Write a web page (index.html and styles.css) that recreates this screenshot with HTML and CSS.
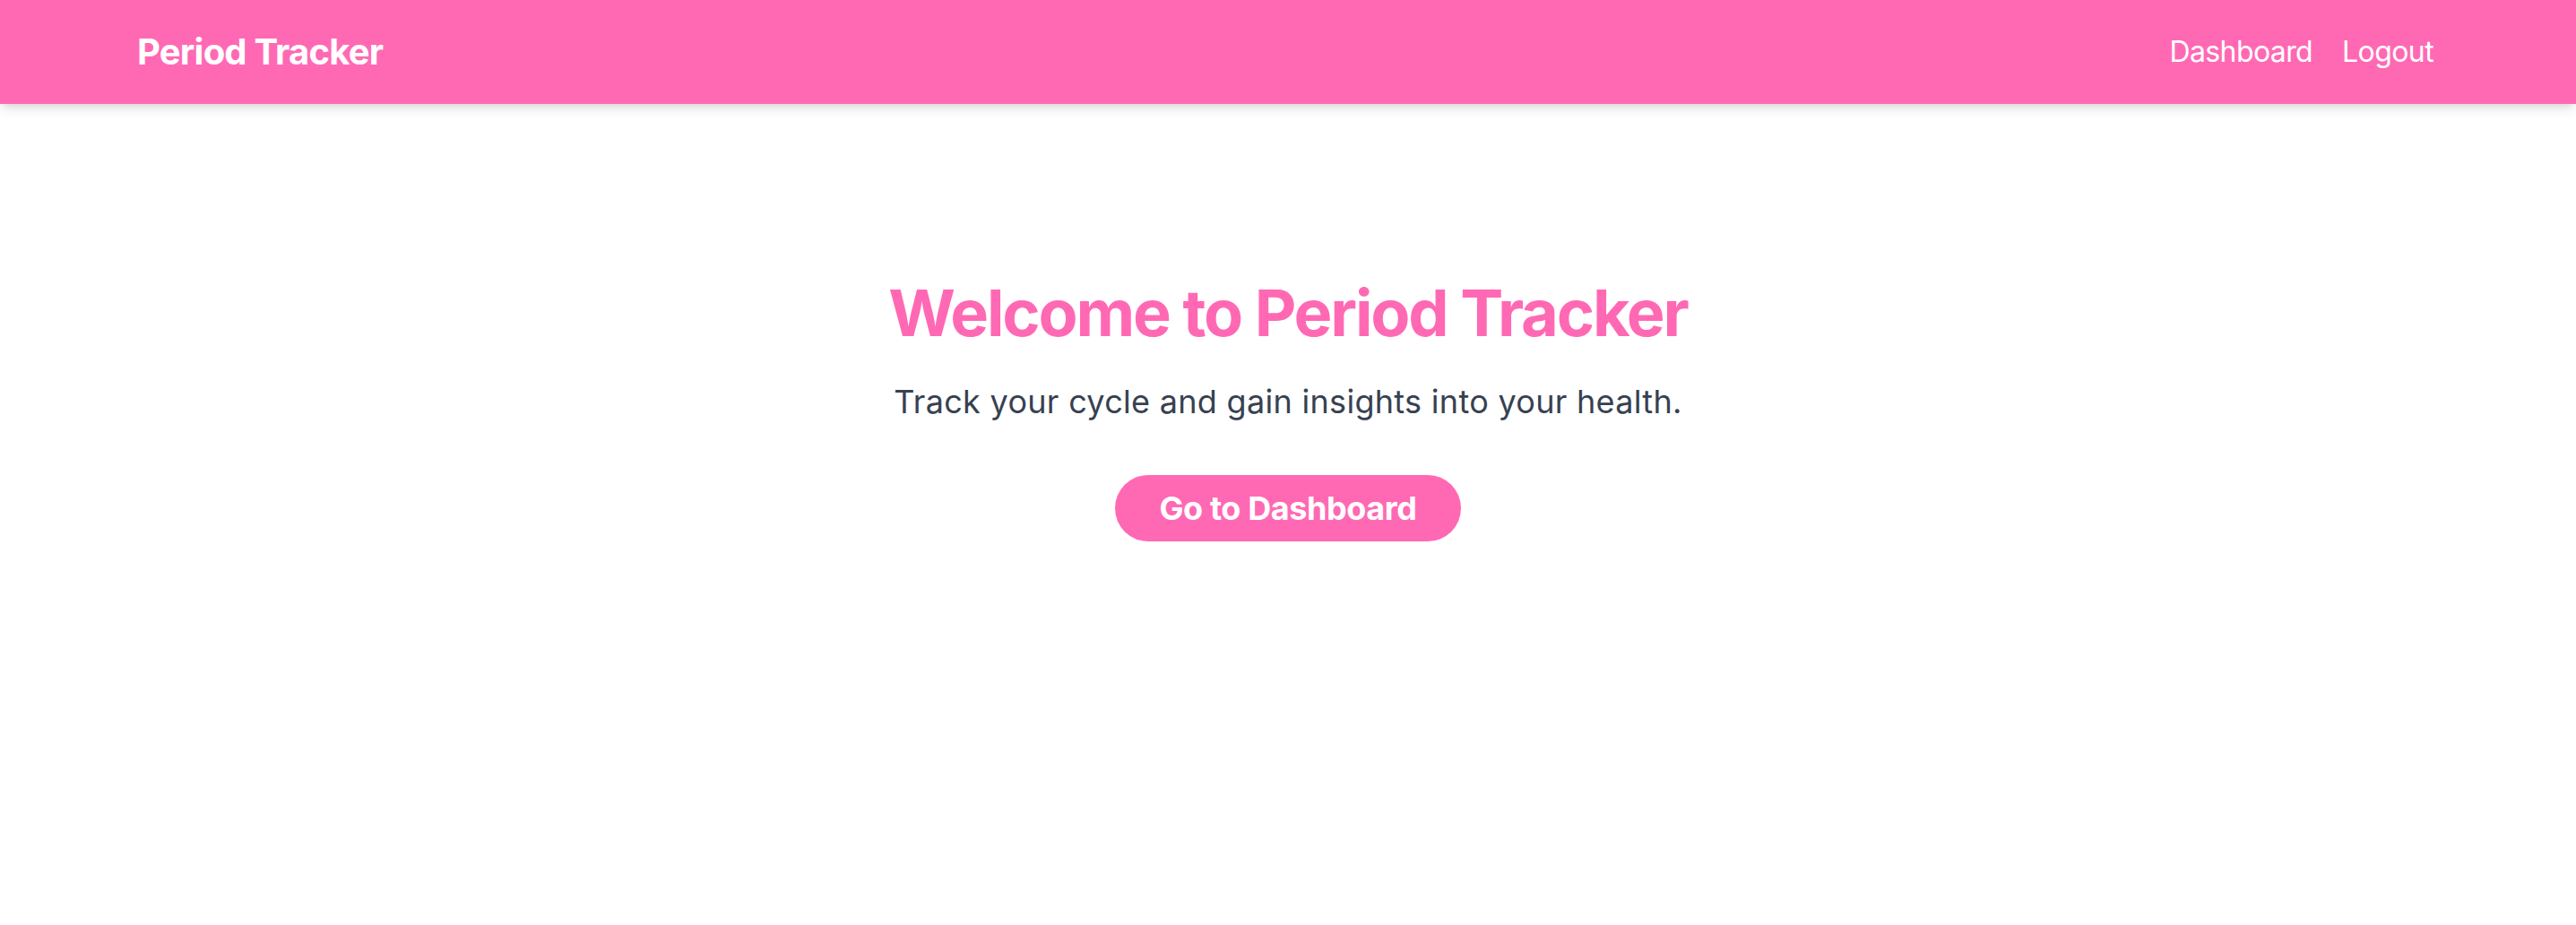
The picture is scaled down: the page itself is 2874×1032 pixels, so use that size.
FILE: index.html
```html
<!DOCTYPE html>
<html lang="en">
<head>
<meta charset="utf-8">
<title>Period Tracker</title>
<link rel="stylesheet" href="styles.css">
</head>
<body>
<nav class="navbar">
  <div class="brand">Period Tracker</div>
  <div class="nav-links">
    <a class="nav-link" href="#">Dashboard</a>
    <a class="nav-link" href="#">Logout</a>
  </div>
</nav>
<main class="hero">
  <h1 class="hero-title">Welcome to Period Tracker</h1>
  <p class="hero-text">Track your cycle and gain insights into your health.</p>
  <a class="hero-button" href="#">Go to Dashboard</a>
</main>
</body>
</html>
```

FILE: styles.css
```css
* {
  box-sizing: border-box;
}

body {
  margin: 0;
  background: #ffffff;
  font-family: Inter, "Noto Sans", "Liberation Sans", sans-serif;
}

.navbar {
  height: 116px;
  background: #ff69b4;
  display: flex;
  align-items: center;
  justify-content: space-between;
  padding: 0 159px 0 153px;
  box-shadow: 0 8px 12px -2px rgba(0, 0, 0, 0.1), 0 4px 8px -4px rgba(0, 0, 0, 0.1);
  position: relative;
}

.brand {
  color: #ffffff;
  font-size: 40px;
  font-weight: 700;
  line-height: 56px;
  letter-spacing: -0.8px;
}

.nav-links {
  display: flex;
  gap: 33px;
}

.nav-link {
  color: #ffffff;
  text-decoration: none;
  font-size: 32px;
  line-height: 48px;
  letter-spacing: -0.6px;
}

.hero {
  display: flex;
  flex-direction: column;
  align-items: center;
  padding-top: 193px;
}

.hero-title {
  margin: 0 0 31px;
  color: #ff69b4;
  font-size: 72px;
  font-weight: 700;
  line-height: 80px;
  letter-spacing: -2.2px;
}

.hero-text {
  margin: 0 0 54px;
  color: #374151;
  font-size: 36px;
  line-height: 56px;
  letter-spacing: 0.3px;
}

.hero-button {
  display: inline-block;
  background: #ff69b4;
  color: #ffffff;
  text-decoration: none;
  font-size: 36px;
  font-weight: 700;
  line-height: 44px;
  padding: 15px 49px;
  border-radius: 9999px;
  letter-spacing: -0.4px;
}
```
